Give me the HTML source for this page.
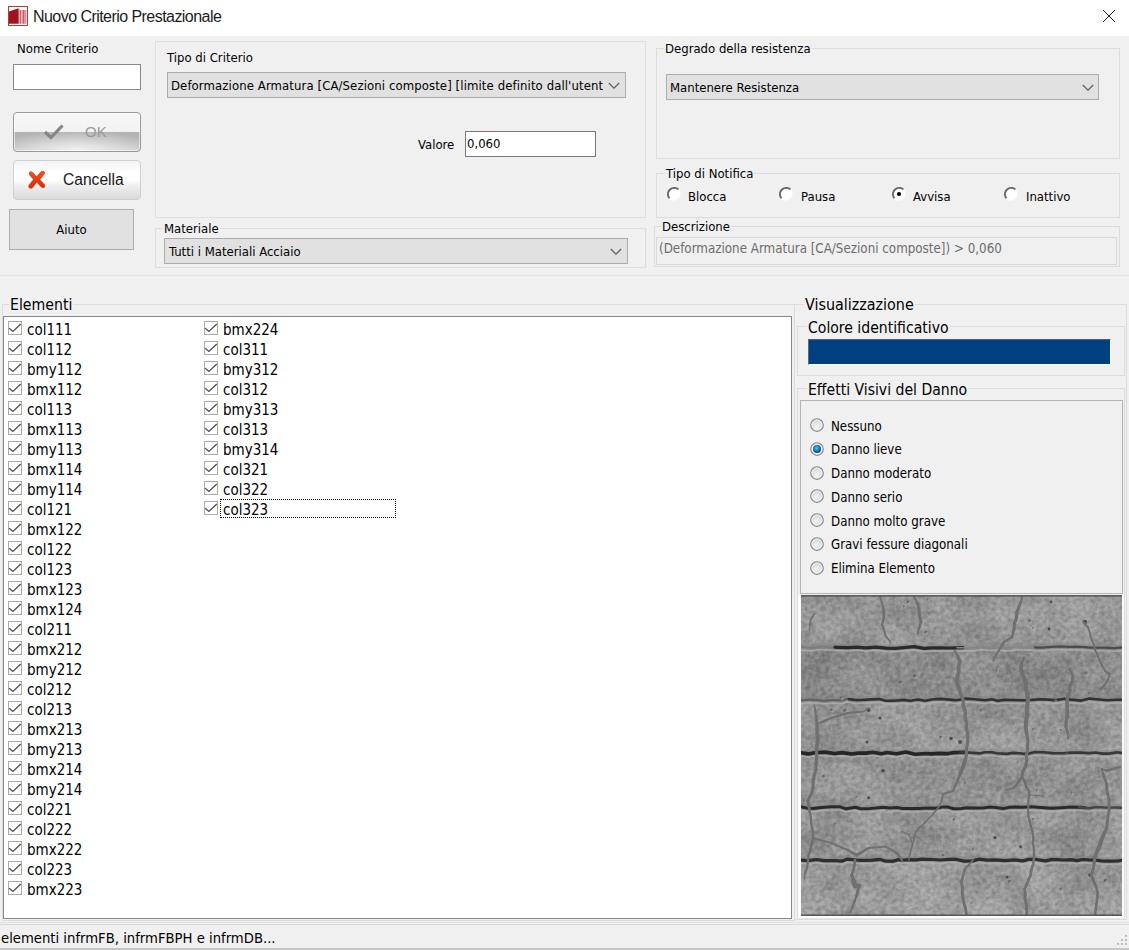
<!DOCTYPE html>
<html lang="it">
<head>
<meta charset="utf-8">
<title>Nuovo Criterio Prestazionale</title>
<style>
html,body{margin:0;padding:0;}
body{width:1129px;height:950px;overflow:hidden;background:#f0f0f0;position:relative;
  font-family:"DejaVu Sans Condensed","Liberation Sans",sans-serif;font-size:13px;color:#000;}
.abs{position:absolute;box-sizing:border-box;}
#titlebar{left:0;top:0;width:1129px;height:36px;background:#fff;}
#title{left:33px;top:7px;color:#1c1c1c;font-family:"Liberation Sans",sans-serif;font-size:16px;letter-spacing:-0.55px;line-height:20px;white-space:nowrap;}
.gb{border:1px solid #dcdcdc;}
.gbl{background:#f0f0f0;white-space:nowrap;line-height:16px;padding:0 1px;}
.lbl{white-space:nowrap;line-height:16px;}
.big{font-size:16px;line-height:20px;}
.combo{background:#e1e1e1;border:1px solid #adadad;line-height:24px;padding-left:6px;white-space:nowrap;overflow:hidden;}
.edit{background:#fff;border:1px solid #7a7a7a;line-height:20px;padding-left:3px;}
#list{left:3px;top:316px;width:789px;height:603px;background:#fff;border:1px solid #828790;}
.it{position:absolute;height:20px;line-height:20px;font-size:15px;white-space:nowrap;}
.it svg{position:absolute;left:0;top:3px;}
.it span{position:absolute;left:19px;top:2px;}
.rl{white-space:nowrap;line-height:16px;}
#status{left:0;top:924px;width:1129px;height:26px;background:#f0f0f0;border-top:1px solid #dadada;border-bottom:2px solid #c6c6c6;}
</style>
</head>
<body>
<div class="abs" id="titlebar"></div>
<div class="abs" id="title">Nuovo Criterio Prestazionale</div>

<svg class="abs" style="left:8px;top:6px" width="20" height="20" viewBox="0 0 20 20">
  <rect x="0.5" y="0.5" width="19" height="19" fill="#fff" stroke="#b83a2e"/>
  <polygon points="1,5.6 9.8,2.6 10.8,2.8 10.8,17.8 1,17.8" fill="#9e1520"/>
  <rect x="10.8" y="3.6" width="0.8" height="14.2" fill="#eab5bb"/>
  <rect x="11.6" y="3.8" width="2" height="14" fill="#d4606f"/>
  <rect x="13.6" y="3.8" width="0.9" height="14" fill="#f3d0d4"/>
  <rect x="14.5" y="4" width="1.8" height="13.8" fill="#cf5565"/>
  <rect x="16.3" y="4" width="2" height="13.8" fill="#dc8893"/>
</svg>
<svg class="abs" style="left:1102px;top:9px" width="14" height="14" viewBox="0 0 14 14"><path d="M1 1 L13 13 M13 1 L1 13" stroke="#000" stroke-width="0.9" fill="none"/></svg>

<div class="abs lbl" style="left:17px;top:41px;">Nome Criterio</div>
<div class="abs edit" style="left:13px;top:64px;width:128px;height:26px;border-color:#8a8a8a;"></div>

<div class="abs" id="okbtn" style="left:13px;top:112px;width:128px;height:40px;border:1px solid #999;border-radius:4px;box-shadow:inset 0 0 0 1px rgba(255,255,255,0.55);background:radial-gradient(ellipse 60% 55% at 50% 100%,rgba(255,255,255,0.75) 0%,rgba(255,255,255,0) 100%),linear-gradient(to bottom,#f7f7f7 0%,#f2f2f2 50%,#b2b2b2 51%,#bcbcbc 75%,#cfcfcf 100%);"></div>
<svg class="abs" style="left:43px;top:123px" width="22" height="18" viewBox="0 0 22 18"><path d="M2 9 L8 14.5 L19.5 2.5" stroke="#868686" stroke-width="3.2" fill="none" stroke-linejoin="miter"/></svg>
<div class="abs" style="left:85px;top:122px;font-family:'Liberation Sans',sans-serif;font-size:15px;line-height:20px;color:#9a9a9a;">OK</div>

<div class="abs" id="cancbtn" style="left:13px;top:160px;width:128px;height:40px;border:1px solid #d0d0d0;border-radius:4px;background:linear-gradient(to bottom,#f3f3f3 0%,#ffffff 30%,#ffffff 50%,#efefef 65%,#d9d9d9 100%);"></div>
<svg class="abs" style="left:27px;top:170px" width="20" height="20" viewBox="0 0 20 20"><defs><linearGradient id="xg" x1="0" y1="0" x2="0" y2="1"><stop offset="0" stop-color="#f4511f"/><stop offset="1" stop-color="#d42c0c"/></linearGradient></defs><path d="M3.2 1.4 C4.6 0.8 5.8 2.2 7 3.4 L9.6 6.2 L13.2 2.2 C14.2 1 15.8 0.8 17.4 1.6 C18.6 2.4 18 3.8 17 4.8 L13.2 9.4 L17.6 14.4 C18.6 15.6 18.4 17 17 17.8 C15.6 18.6 14.4 17.6 13.4 16.6 L9.8 12.6 L6.2 17.2 C5.2 18.4 3.8 19 2.4 18.2 C1 17.4 1.2 15.8 2.2 14.6 L6.2 9.6 L2.4 5.2 C1.4 4 1.6 2.2 3.2 1.4 Z" fill="url(#xg)"/></svg>
<div class="abs" style="left:63px;top:170px;font-family:'Liberation Sans',sans-serif;font-size:15.6px;line-height:20px;color:#1a1a1a;">Cancella</div>

<div class="abs" style="left:9px;top:209px;width:125px;height:41px;background:#e1e1e1;border:1px solid #adadad;text-align:center;line-height:39px;">Aiuto</div>

<div class="abs" style="left:0;top:275px;width:1129px;height:1px;background:#e2e2e2;"></div>

<div class="abs gb" style="left:155px;top:41px;width:491px;height:177px;border-color:#e0e0e0;"></div>
<div class="abs lbl" style="left:167px;top:50px;">Tipo di Criterio</div>
<div class="abs combo" style="left:167px;top:72px;width:459px;height:26px;padding-left:3px;line-height:26px;"><div style="width:432px;overflow:hidden;letter-spacing:0.1px;">Deformazione Armatura [CA/Sezioni composte] [limite definito dall'utente]</div></div>
<svg class="abs" style="left:608px;top:82px" width="12" height="8" viewBox="0 0 12 8"><path d="M0.8 1 L6 6.2 L11.2 1" stroke="#5a5a5a" stroke-width="1.1" fill="none"/></svg>
<div class="abs lbl" style="left:418px;top:137px;">Valore</div>
<div class="abs edit" style="left:465px;top:131px;width:131px;height:26px;line-height:23px;padding-left:1px;">0,060</div>

<div class="abs gb" style="left:155px;top:228px;width:491px;height:40px;"></div>
<div class="abs gbl" style="left:163px;top:221px;">Materiale</div>
<div class="abs combo" style="left:164px;top:238px;width:464px;height:26px;padding-left:4px;line-height:26px;">Tutti i Materiali Acciaio</div>
<svg class="abs" style="left:610px;top:248px" width="12" height="8" viewBox="0 0 12 8"><path d="M0.8 1 L6 6.2 L11.2 1" stroke="#5a5a5a" stroke-width="1.1" fill="none"/></svg>

<div class="abs gb" style="left:656px;top:48px;width:464px;height:111px;"></div>
<div class="abs gbl" style="left:664px;top:41px;">Degrado della resistenza</div>
<div class="abs combo" style="left:666px;top:74px;width:433px;height:26px;padding-left:3px;line-height:26px;">Mantenere Resistenza</div>
<svg class="abs" style="left:1082px;top:84px" width="12" height="8" viewBox="0 0 12 8"><path d="M0.8 1 L6 6.2 L11.2 1" stroke="#5a5a5a" stroke-width="1.1" fill="none"/></svg>

<div class="abs gb" style="left:656px;top:173px;width:464px;height:45px;"></div>
<div class="abs gbl" style="left:665px;top:166px;">Tipo di Notifica</div>
<svg class="abs" style="left:667px;top:187px" width="14" height="14" viewBox="0 0 14 14"><circle cx="7" cy="7" r="6" fill="#fff"/><path d="M2.55 11.45 A6.3 6.3 0 0 1 11.45 2.55" stroke="#686868" stroke-width="1.9" fill="none"/><path d="M11.45 2.55 A6.3 6.3 0 0 1 2.55 11.45" stroke="#fdfdfd" stroke-width="1.2" fill="none"/></svg><div class="abs rl" style="left:688px;top:189px;">Blocca</div>
<svg class="abs" style="left:779px;top:187px" width="14" height="14" viewBox="0 0 14 14"><circle cx="7" cy="7" r="6" fill="#fff"/><path d="M2.55 11.45 A6.3 6.3 0 0 1 11.45 2.55" stroke="#686868" stroke-width="1.9" fill="none"/><path d="M11.45 2.55 A6.3 6.3 0 0 1 2.55 11.45" stroke="#fdfdfd" stroke-width="1.2" fill="none"/></svg><div class="abs rl" style="left:801px;top:189px;">Pausa</div>
<svg class="abs" style="left:892px;top:187px" width="14" height="14" viewBox="0 0 14 14"><circle cx="7" cy="7" r="6" fill="#fff"/><path d="M2.55 11.45 A6.3 6.3 0 0 1 11.45 2.55" stroke="#686868" stroke-width="1.9" fill="none"/><path d="M11.45 2.55 A6.3 6.3 0 0 1 2.55 11.45" stroke="#fdfdfd" stroke-width="1.2" fill="none"/><circle cx="7" cy="7" r="2.1" fill="#000"/></svg><div class="abs rl" style="left:913px;top:189px;">Avvisa</div>
<svg class="abs" style="left:1004px;top:187px" width="14" height="14" viewBox="0 0 14 14"><circle cx="7" cy="7" r="6" fill="#fff"/><path d="M2.55 11.45 A6.3 6.3 0 0 1 11.45 2.55" stroke="#686868" stroke-width="1.9" fill="none"/><path d="M11.45 2.55 A6.3 6.3 0 0 1 2.55 11.45" stroke="#fdfdfd" stroke-width="1.2" fill="none"/></svg><div class="abs rl" style="left:1026px;top:189px;">Inattivo</div>

<div class="abs gb" style="left:654px;top:226px;width:466px;height:41px;"></div>
<div class="abs gbl" style="left:661px;top:219px;">Descrizione</div>
<div class="abs" style="left:656px;top:237px;width:461px;height:28px;border:1px solid #dadada;background:#f0f0f0;color:#6d6d6d;line-height:22px;padding-left:2px;font-size:13.25px;white-space:nowrap;">(Deformazione Armatura [CA/Sezioni composte]) &gt; 0,060</div>

<div class="abs gb" style="left:2px;top:304px;width:793px;height:617px;"></div>
<div class="abs" style="left:0;top:922px;width:1129px;height:1px;background:#e2e2e2;"></div>
<div class="abs gbl" style="left:9px;top:295px;font-size:15.7px;line-height:20px;">Elementi</div>
<div class="abs" id="list">
<div class="it" style="left:4px;top:1px;"><svg width="14" height="14" viewBox="0 0 14 14"><rect x="0.5" y="0.5" width="13" height="13" fill="#fff" stroke="#ababab"/><path d="M1.2 7.2 L4.9 10.4 L12.8 3" stroke="#4d4d4d" stroke-width="1.3" fill="none"/></svg><span>col111</span></div>
<div class="it" style="left:4px;top:21px;"><svg width="14" height="14" viewBox="0 0 14 14"><rect x="0.5" y="0.5" width="13" height="13" fill="#fff" stroke="#ababab"/><path d="M1.2 7.2 L4.9 10.4 L12.8 3" stroke="#4d4d4d" stroke-width="1.3" fill="none"/></svg><span>col112</span></div>
<div class="it" style="left:4px;top:41px;"><svg width="14" height="14" viewBox="0 0 14 14"><rect x="0.5" y="0.5" width="13" height="13" fill="#fff" stroke="#ababab"/><path d="M1.2 7.2 L4.9 10.4 L12.8 3" stroke="#4d4d4d" stroke-width="1.3" fill="none"/></svg><span>bmy112</span></div>
<div class="it" style="left:4px;top:61px;"><svg width="14" height="14" viewBox="0 0 14 14"><rect x="0.5" y="0.5" width="13" height="13" fill="#fff" stroke="#ababab"/><path d="M1.2 7.2 L4.9 10.4 L12.8 3" stroke="#4d4d4d" stroke-width="1.3" fill="none"/></svg><span>bmx112</span></div>
<div class="it" style="left:4px;top:81px;"><svg width="14" height="14" viewBox="0 0 14 14"><rect x="0.5" y="0.5" width="13" height="13" fill="#fff" stroke="#ababab"/><path d="M1.2 7.2 L4.9 10.4 L12.8 3" stroke="#4d4d4d" stroke-width="1.3" fill="none"/></svg><span>col113</span></div>
<div class="it" style="left:4px;top:101px;"><svg width="14" height="14" viewBox="0 0 14 14"><rect x="0.5" y="0.5" width="13" height="13" fill="#fff" stroke="#ababab"/><path d="M1.2 7.2 L4.9 10.4 L12.8 3" stroke="#4d4d4d" stroke-width="1.3" fill="none"/></svg><span>bmx113</span></div>
<div class="it" style="left:4px;top:121px;"><svg width="14" height="14" viewBox="0 0 14 14"><rect x="0.5" y="0.5" width="13" height="13" fill="#fff" stroke="#ababab"/><path d="M1.2 7.2 L4.9 10.4 L12.8 3" stroke="#4d4d4d" stroke-width="1.3" fill="none"/></svg><span>bmy113</span></div>
<div class="it" style="left:4px;top:141px;"><svg width="14" height="14" viewBox="0 0 14 14"><rect x="0.5" y="0.5" width="13" height="13" fill="#fff" stroke="#ababab"/><path d="M1.2 7.2 L4.9 10.4 L12.8 3" stroke="#4d4d4d" stroke-width="1.3" fill="none"/></svg><span>bmx114</span></div>
<div class="it" style="left:4px;top:161px;"><svg width="14" height="14" viewBox="0 0 14 14"><rect x="0.5" y="0.5" width="13" height="13" fill="#fff" stroke="#ababab"/><path d="M1.2 7.2 L4.9 10.4 L12.8 3" stroke="#4d4d4d" stroke-width="1.3" fill="none"/></svg><span>bmy114</span></div>
<div class="it" style="left:4px;top:181px;"><svg width="14" height="14" viewBox="0 0 14 14"><rect x="0.5" y="0.5" width="13" height="13" fill="#fff" stroke="#ababab"/><path d="M1.2 7.2 L4.9 10.4 L12.8 3" stroke="#4d4d4d" stroke-width="1.3" fill="none"/></svg><span>col121</span></div>
<div class="it" style="left:4px;top:201px;"><svg width="14" height="14" viewBox="0 0 14 14"><rect x="0.5" y="0.5" width="13" height="13" fill="#fff" stroke="#ababab"/><path d="M1.2 7.2 L4.9 10.4 L12.8 3" stroke="#4d4d4d" stroke-width="1.3" fill="none"/></svg><span>bmx122</span></div>
<div class="it" style="left:4px;top:221px;"><svg width="14" height="14" viewBox="0 0 14 14"><rect x="0.5" y="0.5" width="13" height="13" fill="#fff" stroke="#ababab"/><path d="M1.2 7.2 L4.9 10.4 L12.8 3" stroke="#4d4d4d" stroke-width="1.3" fill="none"/></svg><span>col122</span></div>
<div class="it" style="left:4px;top:241px;"><svg width="14" height="14" viewBox="0 0 14 14"><rect x="0.5" y="0.5" width="13" height="13" fill="#fff" stroke="#ababab"/><path d="M1.2 7.2 L4.9 10.4 L12.8 3" stroke="#4d4d4d" stroke-width="1.3" fill="none"/></svg><span>col123</span></div>
<div class="it" style="left:4px;top:261px;"><svg width="14" height="14" viewBox="0 0 14 14"><rect x="0.5" y="0.5" width="13" height="13" fill="#fff" stroke="#ababab"/><path d="M1.2 7.2 L4.9 10.4 L12.8 3" stroke="#4d4d4d" stroke-width="1.3" fill="none"/></svg><span>bmx123</span></div>
<div class="it" style="left:4px;top:281px;"><svg width="14" height="14" viewBox="0 0 14 14"><rect x="0.5" y="0.5" width="13" height="13" fill="#fff" stroke="#ababab"/><path d="M1.2 7.2 L4.9 10.4 L12.8 3" stroke="#4d4d4d" stroke-width="1.3" fill="none"/></svg><span>bmx124</span></div>
<div class="it" style="left:4px;top:301px;"><svg width="14" height="14" viewBox="0 0 14 14"><rect x="0.5" y="0.5" width="13" height="13" fill="#fff" stroke="#ababab"/><path d="M1.2 7.2 L4.9 10.4 L12.8 3" stroke="#4d4d4d" stroke-width="1.3" fill="none"/></svg><span>col211</span></div>
<div class="it" style="left:4px;top:321px;"><svg width="14" height="14" viewBox="0 0 14 14"><rect x="0.5" y="0.5" width="13" height="13" fill="#fff" stroke="#ababab"/><path d="M1.2 7.2 L4.9 10.4 L12.8 3" stroke="#4d4d4d" stroke-width="1.3" fill="none"/></svg><span>bmx212</span></div>
<div class="it" style="left:4px;top:341px;"><svg width="14" height="14" viewBox="0 0 14 14"><rect x="0.5" y="0.5" width="13" height="13" fill="#fff" stroke="#ababab"/><path d="M1.2 7.2 L4.9 10.4 L12.8 3" stroke="#4d4d4d" stroke-width="1.3" fill="none"/></svg><span>bmy212</span></div>
<div class="it" style="left:4px;top:361px;"><svg width="14" height="14" viewBox="0 0 14 14"><rect x="0.5" y="0.5" width="13" height="13" fill="#fff" stroke="#ababab"/><path d="M1.2 7.2 L4.9 10.4 L12.8 3" stroke="#4d4d4d" stroke-width="1.3" fill="none"/></svg><span>col212</span></div>
<div class="it" style="left:4px;top:381px;"><svg width="14" height="14" viewBox="0 0 14 14"><rect x="0.5" y="0.5" width="13" height="13" fill="#fff" stroke="#ababab"/><path d="M1.2 7.2 L4.9 10.4 L12.8 3" stroke="#4d4d4d" stroke-width="1.3" fill="none"/></svg><span>col213</span></div>
<div class="it" style="left:4px;top:401px;"><svg width="14" height="14" viewBox="0 0 14 14"><rect x="0.5" y="0.5" width="13" height="13" fill="#fff" stroke="#ababab"/><path d="M1.2 7.2 L4.9 10.4 L12.8 3" stroke="#4d4d4d" stroke-width="1.3" fill="none"/></svg><span>bmx213</span></div>
<div class="it" style="left:4px;top:421px;"><svg width="14" height="14" viewBox="0 0 14 14"><rect x="0.5" y="0.5" width="13" height="13" fill="#fff" stroke="#ababab"/><path d="M1.2 7.2 L4.9 10.4 L12.8 3" stroke="#4d4d4d" stroke-width="1.3" fill="none"/></svg><span>bmy213</span></div>
<div class="it" style="left:4px;top:441px;"><svg width="14" height="14" viewBox="0 0 14 14"><rect x="0.5" y="0.5" width="13" height="13" fill="#fff" stroke="#ababab"/><path d="M1.2 7.2 L4.9 10.4 L12.8 3" stroke="#4d4d4d" stroke-width="1.3" fill="none"/></svg><span>bmx214</span></div>
<div class="it" style="left:4px;top:461px;"><svg width="14" height="14" viewBox="0 0 14 14"><rect x="0.5" y="0.5" width="13" height="13" fill="#fff" stroke="#ababab"/><path d="M1.2 7.2 L4.9 10.4 L12.8 3" stroke="#4d4d4d" stroke-width="1.3" fill="none"/></svg><span>bmy214</span></div>
<div class="it" style="left:4px;top:481px;"><svg width="14" height="14" viewBox="0 0 14 14"><rect x="0.5" y="0.5" width="13" height="13" fill="#fff" stroke="#ababab"/><path d="M1.2 7.2 L4.9 10.4 L12.8 3" stroke="#4d4d4d" stroke-width="1.3" fill="none"/></svg><span>col221</span></div>
<div class="it" style="left:4px;top:501px;"><svg width="14" height="14" viewBox="0 0 14 14"><rect x="0.5" y="0.5" width="13" height="13" fill="#fff" stroke="#ababab"/><path d="M1.2 7.2 L4.9 10.4 L12.8 3" stroke="#4d4d4d" stroke-width="1.3" fill="none"/></svg><span>col222</span></div>
<div class="it" style="left:4px;top:521px;"><svg width="14" height="14" viewBox="0 0 14 14"><rect x="0.5" y="0.5" width="13" height="13" fill="#fff" stroke="#ababab"/><path d="M1.2 7.2 L4.9 10.4 L12.8 3" stroke="#4d4d4d" stroke-width="1.3" fill="none"/></svg><span>bmx222</span></div>
<div class="it" style="left:4px;top:541px;"><svg width="14" height="14" viewBox="0 0 14 14"><rect x="0.5" y="0.5" width="13" height="13" fill="#fff" stroke="#ababab"/><path d="M1.2 7.2 L4.9 10.4 L12.8 3" stroke="#4d4d4d" stroke-width="1.3" fill="none"/></svg><span>col223</span></div>
<div class="it" style="left:4px;top:561px;"><svg width="14" height="14" viewBox="0 0 14 14"><rect x="0.5" y="0.5" width="13" height="13" fill="#fff" stroke="#ababab"/><path d="M1.2 7.2 L4.9 10.4 L12.8 3" stroke="#4d4d4d" stroke-width="1.3" fill="none"/></svg><span>bmx223</span></div>
<div class="it" style="left:200px;top:1px;"><svg width="14" height="14" viewBox="0 0 14 14"><rect x="0.5" y="0.5" width="13" height="13" fill="#fff" stroke="#ababab"/><path d="M1.2 7.2 L4.9 10.4 L12.8 3" stroke="#4d4d4d" stroke-width="1.3" fill="none"/></svg><span>bmx224</span></div>
<div class="it" style="left:200px;top:21px;"><svg width="14" height="14" viewBox="0 0 14 14"><rect x="0.5" y="0.5" width="13" height="13" fill="#fff" stroke="#ababab"/><path d="M1.2 7.2 L4.9 10.4 L12.8 3" stroke="#4d4d4d" stroke-width="1.3" fill="none"/></svg><span>col311</span></div>
<div class="it" style="left:200px;top:41px;"><svg width="14" height="14" viewBox="0 0 14 14"><rect x="0.5" y="0.5" width="13" height="13" fill="#fff" stroke="#ababab"/><path d="M1.2 7.2 L4.9 10.4 L12.8 3" stroke="#4d4d4d" stroke-width="1.3" fill="none"/></svg><span>bmy312</span></div>
<div class="it" style="left:200px;top:61px;"><svg width="14" height="14" viewBox="0 0 14 14"><rect x="0.5" y="0.5" width="13" height="13" fill="#fff" stroke="#ababab"/><path d="M1.2 7.2 L4.9 10.4 L12.8 3" stroke="#4d4d4d" stroke-width="1.3" fill="none"/></svg><span>col312</span></div>
<div class="it" style="left:200px;top:81px;"><svg width="14" height="14" viewBox="0 0 14 14"><rect x="0.5" y="0.5" width="13" height="13" fill="#fff" stroke="#ababab"/><path d="M1.2 7.2 L4.9 10.4 L12.8 3" stroke="#4d4d4d" stroke-width="1.3" fill="none"/></svg><span>bmy313</span></div>
<div class="it" style="left:200px;top:101px;"><svg width="14" height="14" viewBox="0 0 14 14"><rect x="0.5" y="0.5" width="13" height="13" fill="#fff" stroke="#ababab"/><path d="M1.2 7.2 L4.9 10.4 L12.8 3" stroke="#4d4d4d" stroke-width="1.3" fill="none"/></svg><span>col313</span></div>
<div class="it" style="left:200px;top:121px;"><svg width="14" height="14" viewBox="0 0 14 14"><rect x="0.5" y="0.5" width="13" height="13" fill="#fff" stroke="#ababab"/><path d="M1.2 7.2 L4.9 10.4 L12.8 3" stroke="#4d4d4d" stroke-width="1.3" fill="none"/></svg><span>bmy314</span></div>
<div class="it" style="left:200px;top:141px;"><svg width="14" height="14" viewBox="0 0 14 14"><rect x="0.5" y="0.5" width="13" height="13" fill="#fff" stroke="#ababab"/><path d="M1.2 7.2 L4.9 10.4 L12.8 3" stroke="#4d4d4d" stroke-width="1.3" fill="none"/></svg><span>col321</span></div>
<div class="it" style="left:200px;top:161px;"><svg width="14" height="14" viewBox="0 0 14 14"><rect x="0.5" y="0.5" width="13" height="13" fill="#fff" stroke="#ababab"/><path d="M1.2 7.2 L4.9 10.4 L12.8 3" stroke="#4d4d4d" stroke-width="1.3" fill="none"/></svg><span>col322</span></div>
<div class="it" style="left:200px;top:181px;"><svg width="14" height="14" viewBox="0 0 14 14"><rect x="0.5" y="0.5" width="13" height="13" fill="#fff" stroke="#ababab"/><path d="M1.2 7.2 L4.9 10.4 L12.8 3" stroke="#4d4d4d" stroke-width="1.3" fill="none"/></svg><span>col323</span></div>
<div class="abs" style="left:216px;top:182px;width:176px;height:19px;border:1px dotted #000;"></div>
</div>

<svg width="0" height="0" style="position:absolute"><defs>
<radialGradient id="rbg" cx="0.5" cy="0.65" r="0.6"><stop offset="0" stop-color="#f4f5f6"/><stop offset="0.6" stop-color="#dfe2e5"/><stop offset="1" stop-color="#c9cdd1"/></radialGradient>
<radialGradient id="rdot" cx="0.45" cy="0.4" r="0.6"><stop offset="0" stop-color="#5cc3f0"/><stop offset="0.55" stop-color="#1a7fc4"/><stop offset="1" stop-color="#0b3f73"/></radialGradient>
</defs></svg>
<div class="abs gb" style="left:794px;top:304px;width:333px;height:616px;"></div>
<div class="abs gbl" style="left:804px;top:295px;font-size:15.95px;line-height:20px;">Visualizzazione</div>
<div class="abs gb" style="left:797px;top:326px;width:328px;height:50px;"></div>
<div class="abs gbl" style="left:807px;top:318px;font-size:15.6px;line-height:20px;">Colore identificativo</div>
<div class="abs" style="left:808px;top:339px;width:303px;height:26px;background:#004080;border-top:1px solid #4f5f73;border-left:1px solid #4f6a8a;border-right:1px solid #fff;border-bottom:1px solid #fff;"></div>
<div class="abs gb" style="left:797px;top:388px;width:328px;height:531px;border-bottom-color:#e6e6e6;"></div>
<div class="abs" style="left:798px;top:595px;width:326px;height:323px;background:#fbfbfb;"></div>
<div class="abs gbl" style="left:807px;top:380px;font-size:15.6px;line-height:20px;">Effetti Visivi del Danno</div>
<div class="abs" style="left:800px;top:400px;width:323px;height:194px;border:1px solid #b4b4b4;"></div>
<svg class="abs" style="left:810px;top:418.1px" width="14" height="14" viewBox="0 0 14 14"><circle cx="7" cy="7" r="6.3" fill="url(#rbg)" stroke="#868787" stroke-width="1.15"/><circle cx="7" cy="7" r="5" fill="none" stroke="#f6f6f6" stroke-width="0.9"/></svg><div class="abs rl" style="left:831px;top:419px;font-size:13.2px;">Nessuno</div>
<svg class="abs" style="left:810px;top:441.9px" width="14" height="14" viewBox="0 0 14 14"><circle cx="7" cy="7" r="6.3" fill="url(#rbg)" stroke="#868787" stroke-width="1.15"/><circle cx="7" cy="7" r="5" fill="none" stroke="#f6f6f6" stroke-width="0.9"/><circle cx="7" cy="7" r="4" fill="url(#rdot)"/></svg><div class="abs rl" style="left:831px;top:442px;font-size:13.2px;">Danno lieve</div>
<svg class="abs" style="left:810px;top:465.6px" width="14" height="14" viewBox="0 0 14 14"><circle cx="7" cy="7" r="6.3" fill="url(#rbg)" stroke="#868787" stroke-width="1.15"/><circle cx="7" cy="7" r="5" fill="none" stroke="#f6f6f6" stroke-width="0.9"/></svg><div class="abs rl" style="left:831px;top:466px;font-size:13.2px;">Danno moderato</div>
<svg class="abs" style="left:810px;top:489.4px" width="14" height="14" viewBox="0 0 14 14"><circle cx="7" cy="7" r="6.3" fill="url(#rbg)" stroke="#868787" stroke-width="1.15"/><circle cx="7" cy="7" r="5" fill="none" stroke="#f6f6f6" stroke-width="0.9"/></svg><div class="abs rl" style="left:831px;top:490px;font-size:13.2px;">Danno serio</div>
<svg class="abs" style="left:810px;top:513.1px" width="14" height="14" viewBox="0 0 14 14"><circle cx="7" cy="7" r="6.3" fill="url(#rbg)" stroke="#868787" stroke-width="1.15"/><circle cx="7" cy="7" r="5" fill="none" stroke="#f6f6f6" stroke-width="0.9"/></svg><div class="abs rl" style="left:831px;top:514px;font-size:13.2px;">Danno molto grave</div>
<svg class="abs" style="left:810px;top:536.9px" width="14" height="14" viewBox="0 0 14 14"><circle cx="7" cy="7" r="6.3" fill="url(#rbg)" stroke="#868787" stroke-width="1.15"/><circle cx="7" cy="7" r="5" fill="none" stroke="#f6f6f6" stroke-width="0.9"/></svg><div class="abs rl" style="left:831px;top:537px;font-size:13.2px;">Gravi fessure diagonali</div>
<svg class="abs" style="left:810px;top:560.6px" width="14" height="14" viewBox="0 0 14 14"><circle cx="7" cy="7" r="6.3" fill="url(#rbg)" stroke="#868787" stroke-width="1.15"/><circle cx="7" cy="7" r="5" fill="none" stroke="#f6f6f6" stroke-width="0.9"/></svg><div class="abs rl" style="left:831px;top:561px;font-size:13.2px;">Elimina Elemento</div>

<!--TEX--><svg class="abs" style="left:801px;top:595px" width="321" height="321" viewBox="0 0 321 321">
<defs>
<filter id="noise" x="0" y="0" width="100%" height="100%">
<feTurbulence type="fractalNoise" baseFrequency="0.02 0.03" numOctaves="4" seed="7" result="t"/>
<feColorMatrix in="t" type="matrix" values="0 0 0 0 0  0 0 0 0 0  0 0 0 0 0  1.8 0 0 0 -0.6"/>
</filter>
<filter id="noise2" x="0" y="0" width="100%" height="100%">
<feTurbulence type="fractalNoise" baseFrequency="0.25 0.2" numOctaves="2" seed="21" result="t"/>
<feColorMatrix in="t" type="matrix" values="0 0 0 0 1  0 0 0 0 1  0 0 0 0 1  0 1.6 0 0 -0.55"/>
</filter>
<filter id="soft" x="-2%" y="-2%" width="104%" height="104%"><feGaussianBlur stdDeviation="0.55"/></filter>
<filter id="noise3" x="0" y="0" width="100%" height="100%">
<feTurbulence type="fractalNoise" baseFrequency="0.2 0.25" numOctaves="2" seed="4" result="t"/>
<feColorMatrix in="t" type="matrix" values="0 0 0 0 0  0 0 0 0 0  0 0 0 0 0  1.6 0 0 0 -0.55"/>
</filter>
</defs>
<rect width="321" height="321" fill="#9d9d9d"/>
<rect x="0" y="0" width="321" height="52.4" fill="#a4a4a4"/><rect x="0" y="52.4" width="321" height="52.300000000000004" fill="#969696"/><rect x="0" y="104.7" width="321" height="53.39999999999999" fill="#a3a3a3"/><rect x="0" y="158.1" width="321" height="54.70000000000002" fill="#a0a0a0"/><rect x="0" y="212.8" width="321" height="52.39999999999998" fill="#a2a2a2"/><rect x="0" y="265.2" width="321" height="55.80000000000001" fill="#a9a9a9"/>
<rect width="321" height="321" filter="url(#noise)" fill="#000" opacity="0.2"/>
<rect width="321" height="321" filter="url(#noise2)" opacity="0.22"/>
<rect width="321" height="321" filter="url(#noise3)" opacity="0.22"/>
<g filter="url(#soft)">
<path d="M0.0 51.9 L10.7 52.7 L19.2 51.3 L27.4 51.9 L36.5 52.3 L46.4 52.7 L56.2 52.1 L65.0 52.9 L75.0 52.1 L85.0 53.2 L94.2 53.4 L104.9 52.4 L113.1 51.7 L123.1 53.4 L131.0 52.8 L140.3 52.9 L146.3 53.0 L154.8 52.8 L162.3 52.7 L172.0 52.7 L181.3 51.4 L187.3 52.3 L196.2 51.8 L205.3 52.7 L210.5 52.3 L216.9 51.4 L222.7 52.0 L228.8 51.7 L234.0 52.3 L241.3 52.6 L249.8 51.8 L260.2 51.3 L267.7 51.9 L275.1 51.6 L285.1 52.1 L290.3 52.6 L295.9 52.5 L302.9 52.6 L313.7 53.1 L321.0 52.4" stroke="#858585" stroke-width="7" fill="none" opacity="0.5"/>
<path d="M0.0 55.1 L10.7 55.9 L19.2 54.5 L27.4 55.1 L36.5 55.5 L46.4 55.9 L56.2 55.3 L65.0 56.1 L75.0 55.3 L85.0 56.4 L94.2 56.6 L104.9 55.6 L113.1 54.9 L123.1 56.6 L131.0 56.0 L140.3 56.1 L146.3 56.2 L154.8 56.0 L162.3 55.9 L172.0 55.9 L181.3 54.6 L187.3 55.5 L196.2 55.0 L205.3 55.9 L210.5 55.5 L216.9 54.6 L222.7 55.2 L228.8 54.9 L234.0 55.5 L241.3 55.8 L249.8 55.0 L260.2 54.5 L267.7 55.1 L275.1 54.8 L285.1 55.3 L290.3 55.8 L295.9 55.7 L302.9 55.8 L313.7 56.3 L321.0 55.6" stroke="#b6b6b6" stroke-width="1.6" fill="none" opacity="0.7"/>
<path d="M0.0 51.9 L10.7 52.7 L19.2 51.3 L27.4 51.9 L36.5 52.3 L40.0 52.5" stroke="#7c7c7c" stroke-width="1.6" fill="none" stroke-linejoin="round" stroke-linecap="round"/>
<path d="M34.0 52.2 L36.5 52.3 L46.4 52.7 L56.2 52.1 L65.0 52.9 L75.0 52.1 L85.0 53.2 L94.2 53.4 L104.9 52.4 L113.1 51.7 L123.1 53.4 L131.0 52.8 L140.3 52.9 L146.3 53.0 L154.8 52.8 L162.0 52.7" stroke="#2c2c2c" stroke-width="3.2" fill="none" stroke-linejoin="round" stroke-linecap="round"/>
<path d="M156.0 52.7 L162.3 52.7 L172.0 52.7 L181.3 51.4 L187.3 52.3 L196.2 51.8 L205.3 52.7 L210.5 52.3 L216.9 51.4 L222.7 52.0 L228.8 51.7 L234.0 52.3 L240.0 52.6" stroke="#858585" stroke-width="1.5" fill="none" stroke-linejoin="round" stroke-linecap="round"/>
<path d="M234.0 52.3 L241.3 52.6 L249.8 51.8 L260.2 51.3 L267.7 51.9 L275.1 51.6 L285.1 52.1 L290.3 52.6 L295.9 52.5 L302.9 52.6 L313.7 53.1 L321.0 52.4" stroke="#4c4c4c" stroke-width="2.2" fill="none" stroke-linejoin="round" stroke-linecap="round"/>
<path d="M0.0 105.4 L8.9 104.4 L14.7 104.9 L23.1 105.7 L33.9 104.9 L41.0 105.6 L46.0 103.8 L54.4 105.0 L60.2 105.0 L70.6 104.4 L78.2 104.1 L84.9 105.7 L92.2 105.7 L102.7 104.9 L109.3 105.8 L117.2 104.5 L124.1 105.8 L132.1 104.2 L140.0 103.9 L148.7 104.6 L155.4 105.3 L165.4 103.6 L173.6 104.2 L184.2 105.3 L190.7 104.2 L196.6 105.8 L203.4 104.9 L211.2 105.0 L219.8 105.2 L225.6 105.3 L232.4 104.8 L239.4 104.3 L247.6 104.6 L254.7 105.2 L263.3 103.7 L269.8 104.6 L280.3 105.6 L288.6 103.6 L298.2 104.5 L306.7 105.2 L315.5 104.7 L321.0 104.7" stroke="#858585" stroke-width="7" fill="none" opacity="0.5"/>
<path d="M0.0 108.6 L8.9 107.6 L14.7 108.1 L23.1 108.9 L33.9 108.1 L41.0 108.8 L46.0 107.0 L54.4 108.2 L60.2 108.2 L70.6 107.6 L78.2 107.3 L84.9 108.9 L92.2 108.9 L102.7 108.1 L109.3 109.0 L117.2 107.7 L124.1 109.0 L132.1 107.4 L140.0 107.1 L148.7 107.8 L155.4 108.5 L165.4 106.8 L173.6 107.4 L184.2 108.5 L190.7 107.4 L196.6 109.0 L203.4 108.1 L211.2 108.2 L219.8 108.4 L225.6 108.5 L232.4 108.0 L239.4 107.5 L247.6 107.8 L254.7 108.4 L263.3 106.9 L269.8 107.8 L280.3 108.8 L288.6 106.8 L298.2 107.7 L306.7 108.4 L315.5 107.9 L321.0 107.9" stroke="#b6b6b6" stroke-width="1.6" fill="none" opacity="0.7"/>
<path d="M0.0 105.4 L8.9 104.4 L14.7 104.9 L23.1 105.7 L33.9 104.9 L41.0 105.6 L46.0 103.8 L54.0 104.9" stroke="#5e5e5e" stroke-width="2" fill="none" stroke-linejoin="round" stroke-linecap="round"/>
<path d="M48.0 104.1 L54.4 105.0 L60.2 105.0 L70.6 104.4 L78.2 104.1 L84.9 105.7 L92.2 105.7 L102.7 104.9 L109.3 105.8 L117.2 104.5 L124.1 105.8 L132.1 104.2 L140.0 103.9 L148.7 104.6 L155.4 105.3 L165.4 103.6 L173.6 104.2 L184.2 105.3 L190.7 104.2 L196.6 105.8 L203.4 104.9 L211.2 105.0 L219.8 105.2 L225.6 105.3 L232.4 104.8 L239.4 104.3 L247.6 104.6 L254.7 105.2 L263.3 103.7 L269.8 104.6 L280.3 105.6 L288.6 103.6 L298.2 104.5 L306.7 105.2 L315.5 104.7 L321.0 104.7" stroke="#323232" stroke-width="2.6" fill="none" stroke-linejoin="round" stroke-linecap="round"/>
<path d="M0.0 157.8 L7.4 158.9 L13.5 157.7 L23.5 157.1 L33.5 158.5 L41.1 157.6 L50.8 159.0 L56.7 158.1 L65.0 158.1 L71.9 157.3 L80.5 158.8 L85.9 157.5 L95.8 158.7 L104.8 157.1 L114.1 159.2 L125.1 158.5 L130.4 158.9 L136.7 158.4 L147.4 158.6 L153.2 157.6 L163.7 157.3 L172.4 157.9 L178.4 158.4 L183.6 157.2 L190.9 157.2 L196.2 158.3 L205.7 158.9 L211.5 157.9 L218.4 158.3 L226.3 159.1 L233.6 157.1 L242.8 157.3 L251.5 158.1 L262.0 158.2 L270.7 157.6 L279.0 157.6 L288.5 158.1 L294.4 157.5 L301.6 158.6 L307.7 158.6 L316.6 157.2 L321.0 158.1" stroke="#858585" stroke-width="7" fill="none" opacity="0.5"/>
<path d="M0.0 161.0 L7.4 162.1 L13.5 160.9 L23.5 160.3 L33.5 161.7 L41.1 160.8 L50.8 162.2 L56.7 161.3 L65.0 161.3 L71.9 160.5 L80.5 162.0 L85.9 160.7 L95.8 161.9 L104.8 160.3 L114.1 162.4 L125.1 161.7 L130.4 162.1 L136.7 161.6 L147.4 161.8 L153.2 160.8 L163.7 160.5 L172.4 161.1 L178.4 161.6 L183.6 160.4 L190.9 160.4 L196.2 161.5 L205.7 162.1 L211.5 161.1 L218.4 161.5 L226.3 162.3 L233.6 160.3 L242.8 160.5 L251.5 161.3 L262.0 161.4 L270.7 160.8 L279.0 160.8 L288.5 161.3 L294.4 160.7 L301.6 161.8 L307.7 161.8 L316.6 160.4 L321.0 161.3" stroke="#b6b6b6" stroke-width="1.6" fill="none" opacity="0.7"/>
<path d="M0.0 157.8 L7.4 158.9 L13.5 157.7 L23.5 157.1 L33.5 158.5 L41.1 157.6 L50.8 159.0 L56.7 158.1 L65.0 158.1 L71.9 157.3 L80.5 158.8 L85.9 157.5 L95.8 158.7 L104.8 157.1 L114.1 159.2 L125.1 158.5 L130.4 158.9 L136.7 158.4 L147.4 158.6 L153.2 157.6 L163.7 157.3 L165.0 157.4" stroke="#262626" stroke-width="3.6" fill="none" stroke-linejoin="round" stroke-linecap="round"/>
<path d="M159.0 157.5 L163.7 157.3 L172.4 157.9 L178.4 158.4 L183.6 157.2 L190.9 157.2 L196.2 158.3 L205.7 158.9 L211.5 157.9 L218.4 158.3 L226.3 159.1 L233.6 157.1 L242.8 157.3 L251.5 158.1 L262.0 158.2 L270.7 157.6 L279.0 157.6 L288.5 158.1 L294.4 157.5 L301.6 158.6 L307.7 158.6 L316.6 157.2 L321.0 158.1" stroke="#383838" stroke-width="2.6" fill="none" stroke-linejoin="round" stroke-linecap="round"/>
<path d="M0.0 211.9 L5.7 213.0 L12.2 213.6 L20.1 212.4 L29.8 211.8 L39.2 211.8 L45.1 213.8 L54.2 212.2 L59.9 213.8 L68.9 213.5 L74.7 213.1 L81.8 212.2 L88.8 213.1 L95.9 212.5 L101.7 213.5 L110.6 213.5 L118.2 213.6 L126.3 213.0 L134.8 213.3 L142.2 211.9 L147.3 212.1 L152.6 213.7 L160.5 213.4 L165.5 212.7 L175.8 213.1 L183.4 212.7 L189.0 212.0 L194.9 212.5 L202.3 213.6 L208.2 212.3 L214.8 212.1 L221.6 212.2 L229.4 211.8 L240.0 212.5 L250.6 213.2 L259.7 212.7 L270.3 212.0 L279.3 212.3 L288.4 213.3 L294.4 212.1 L299.5 212.2 L305.0 212.6 L315.8 212.5 L321.0 212.8" stroke="#858585" stroke-width="7" fill="none" opacity="0.5"/>
<path d="M0.0 215.1 L5.7 216.2 L12.2 216.8 L20.1 215.6 L29.8 215.0 L39.2 215.0 L45.1 217.0 L54.2 215.4 L59.9 217.0 L68.9 216.7 L74.7 216.3 L81.8 215.4 L88.8 216.3 L95.9 215.7 L101.7 216.7 L110.6 216.7 L118.2 216.8 L126.3 216.2 L134.8 216.5 L142.2 215.1 L147.3 215.3 L152.6 216.9 L160.5 216.6 L165.5 215.9 L175.8 216.3 L183.4 215.9 L189.0 215.2 L194.9 215.7 L202.3 216.8 L208.2 215.5 L214.8 215.3 L221.6 215.4 L229.4 215.0 L240.0 215.7 L250.6 216.4 L259.7 215.9 L270.3 215.2 L279.3 215.5 L288.4 216.5 L294.4 215.3 L299.5 215.4 L305.0 215.8 L315.8 215.7 L321.0 216.0" stroke="#b6b6b6" stroke-width="1.6" fill="none" opacity="0.7"/>
<path d="M0.0 211.9 L5.7 213.0 L12.2 213.6 L20.1 212.4 L29.8 211.8 L39.2 211.8 L45.1 213.8 L54.2 212.2 L59.9 213.8 L68.9 213.5 L74.7 213.1 L81.8 212.2 L88.8 213.1 L95.9 212.5 L101.7 213.5 L110.6 213.5 L118.2 213.6 L126.3 213.0 L134.8 213.3 L142.2 211.9 L147.3 212.1 L152.6 213.7 L160.5 213.4 L165.5 212.7 L175.8 213.1 L183.4 212.7 L189.0 212.0 L194.9 212.5 L202.3 213.6 L208.2 212.3 L214.8 212.1 L221.6 212.2 L229.4 211.8 L240.0 212.5 L250.6 213.2 L259.7 212.7 L270.3 212.0 L279.3 212.3 L284.0 212.8" stroke="#2c2c2c" stroke-width="3" fill="none" stroke-linejoin="round" stroke-linecap="round"/>
<path d="M278.0 212.3 L279.3 212.3 L288.4 213.3 L294.4 212.1 L299.5 212.2 L305.0 212.6 L315.8 212.5 L321.0 212.8" stroke="#444" stroke-width="2.4" fill="none" stroke-linejoin="round" stroke-linecap="round"/>
<path d="M0.0 265.1 L6.7 265.7 L16.0 264.5 L22.4 265.6 L33.1 265.5 L40.7 266.2 L45.7 264.2 L55.4 265.0 L60.7 265.3 L71.6 265.2 L78.7 264.3 L84.1 266.1 L92.1 266.2 L97.4 264.6 L102.7 265.0 L108.1 264.7 L115.5 264.8 L120.8 264.2 L131.6 264.5 L139.7 265.0 L147.9 264.3 L154.8 264.3 L163.0 266.1 L171.6 266.0 L177.9 264.1 L186.1 265.2 L194.6 264.9 L203.3 265.7 L213.8 264.8 L221.5 265.9 L227.8 264.4 L234.7 264.3 L244.3 265.9 L251.2 264.4 L256.7 264.6 L262.2 265.0 L270.7 264.6 L276.0 265.6 L281.3 264.5 L288.0 264.9 L293.6 265.0 L300.5 265.8 L308.8 266.1 L317.8 265.8 L321.0 265.2" stroke="#858585" stroke-width="7" fill="none" opacity="0.5"/>
<path d="M0.0 268.3 L6.7 268.9 L16.0 267.7 L22.4 268.8 L33.1 268.7 L40.7 269.4 L45.7 267.4 L55.4 268.2 L60.7 268.5 L71.6 268.4 L78.7 267.5 L84.1 269.3 L92.1 269.4 L97.4 267.8 L102.7 268.2 L108.1 267.9 L115.5 268.0 L120.8 267.4 L131.6 267.7 L139.7 268.2 L147.9 267.5 L154.8 267.5 L163.0 269.3 L171.6 269.2 L177.9 267.3 L186.1 268.4 L194.6 268.1 L203.3 268.9 L213.8 268.0 L221.5 269.1 L227.8 267.6 L234.7 267.5 L244.3 269.1 L251.2 267.6 L256.7 267.8 L262.2 268.2 L270.7 267.8 L276.0 268.8 L281.3 267.7 L288.0 268.1 L293.6 268.2 L300.5 269.0 L308.8 269.3 L317.8 269.0 L321.0 268.4" stroke="#b6b6b6" stroke-width="1.6" fill="none" opacity="0.7"/>
<path d="M0.0 265.1 L6.7 265.7 L16.0 264.5 L22.4 265.6 L33.1 265.5 L40.7 266.2 L45.7 264.2 L55.4 265.0 L60.7 265.3 L71.6 265.2 L78.7 264.3 L84.1 266.1 L92.1 266.2 L97.4 264.6 L102.7 265.0 L108.1 264.7 L115.5 264.8 L120.8 264.2 L131.6 264.5 L139.7 265.0 L147.9 264.3 L154.8 264.3 L163.0 266.1 L171.6 266.0 L177.9 264.1 L186.1 265.2 L194.6 264.9 L203.3 265.7 L213.8 264.8 L221.5 265.9 L227.8 264.4 L234.7 264.3 L244.3 265.9 L251.2 264.4 L256.7 264.6 L262.2 265.0 L270.7 264.6 L276.0 265.6 L281.3 264.5 L288.0 264.9 L293.6 265.0 L300.5 265.8 L308.8 266.1 L317.8 265.8 L321.0 265.2" stroke="#2e2e2e" stroke-width="3.2" fill="none" stroke-linejoin="round" stroke-linecap="round"/>

<circle cx="142.3" cy="260.3" r="1.4" fill="#4a4a4a" opacity="0.78"/><circle cx="143.2" cy="261.3" r="1.4" fill="#c4c4c4" opacity="0.35"/><circle cx="232.3" cy="223.9" r="1.0" fill="#4a4a4a" opacity="0.72"/><circle cx="233.2" cy="224.9" r="1.0" fill="#c4c4c4" opacity="0.35"/><circle cx="123.5" cy="44.0" r="0.8" fill="#4a4a4a" opacity="0.43"/><circle cx="124.4" cy="45.0" r="0.8" fill="#c4c4c4" opacity="0.35"/><circle cx="85.7" cy="215.9" r="1.0" fill="#4a4a4a" opacity="0.38"/><circle cx="86.6" cy="216.9" r="1.0" fill="#c4c4c4" opacity="0.35"/><circle cx="243.6" cy="178.5" r="0.7" fill="#4a4a4a" opacity="0.37"/><circle cx="244.5" cy="179.5" r="0.7" fill="#c4c4c4" opacity="0.35"/><circle cx="44.0" cy="115.5" r="1.6" fill="#4a4a4a" opacity="0.78"/><circle cx="44.9" cy="116.5" r="1.6" fill="#c4c4c4" opacity="0.35"/><circle cx="195.8" cy="75.8" r="1.2" fill="#4a4a4a" opacity="0.51"/><circle cx="196.7" cy="76.8" r="1.2" fill="#c4c4c4" opacity="0.35"/><circle cx="107.1" cy="6.9" r="1.3" fill="#4a4a4a" opacity="0.72"/><circle cx="108.0" cy="7.9" r="1.3" fill="#c4c4c4" opacity="0.35"/><circle cx="232.0" cy="33.0" r="1.3" fill="#4a4a4a" opacity="0.43"/><circle cx="232.9" cy="34.0" r="1.3" fill="#c4c4c4" opacity="0.35"/><circle cx="226.5" cy="143.6" r="1.7" fill="#4a4a4a" opacity="0.71"/><circle cx="227.4" cy="144.6" r="1.7" fill="#c4c4c4" opacity="0.35"/><circle cx="40.2" cy="102.9" r="1.7" fill="#4a4a4a" opacity="0.56"/><circle cx="41.1" cy="103.9" r="1.7" fill="#c4c4c4" opacity="0.35"/><circle cx="139.8" cy="142.0" r="1.5" fill="#4a4a4a" opacity="0.77"/><circle cx="140.7" cy="143.0" r="1.5" fill="#c4c4c4" opacity="0.35"/><circle cx="170.8" cy="308.4" r="1.4" fill="#4a4a4a" opacity="0.40"/><circle cx="171.7" cy="309.4" r="1.4" fill="#c4c4c4" opacity="0.35"/><circle cx="259.5" cy="135.1" r="0.8" fill="#4a4a4a" opacity="0.79"/><circle cx="260.4" cy="136.1" r="0.8" fill="#c4c4c4" opacity="0.35"/><circle cx="13.4" cy="184.8" r="1.2" fill="#4a4a4a" opacity="0.75"/><circle cx="14.3" cy="185.8" r="1.2" fill="#c4c4c4" opacity="0.35"/><circle cx="126.7" cy="70.9" r="1.0" fill="#4a4a4a" opacity="0.44"/><circle cx="127.6" cy="71.9" r="1.0" fill="#c4c4c4" opacity="0.35"/><circle cx="180.2" cy="115.5" r="1.5" fill="#4a4a4a" opacity="0.46"/><circle cx="181.1" cy="116.5" r="1.5" fill="#c4c4c4" opacity="0.35"/><circle cx="113.8" cy="81.2" r="1.8" fill="#4a4a4a" opacity="0.73"/><circle cx="114.7" cy="82.2" r="1.8" fill="#c4c4c4" opacity="0.35"/><circle cx="270.7" cy="197.7" r="1.1" fill="#4a4a4a" opacity="0.41"/><circle cx="271.6" cy="198.7" r="1.1" fill="#c4c4c4" opacity="0.35"/><circle cx="265.0" cy="157.4" r="0.7" fill="#4a4a4a" opacity="0.43"/><circle cx="265.9" cy="158.4" r="0.7" fill="#c4c4c4" opacity="0.35"/><circle cx="34.1" cy="229.1" r="1.7" fill="#4a4a4a" opacity="0.44"/><circle cx="35.0" cy="230.1" r="1.7" fill="#c4c4c4" opacity="0.35"/><circle cx="254.1" cy="105.1" r="1.5" fill="#4a4a4a" opacity="0.74"/><circle cx="255.0" cy="106.1" r="1.5" fill="#c4c4c4" opacity="0.35"/><circle cx="199.3" cy="255.1" r="1.1" fill="#4a4a4a" opacity="0.35"/><circle cx="200.2" cy="256.1" r="1.1" fill="#c4c4c4" opacity="0.35"/><circle cx="164.2" cy="187.8" r="0.9" fill="#4a4a4a" opacity="0.53"/><circle cx="165.1" cy="188.8" r="0.9" fill="#c4c4c4" opacity="0.35"/><circle cx="102.9" cy="11.5" r="1.0" fill="#4a4a4a" opacity="0.52"/><circle cx="103.8" cy="12.5" r="1.0" fill="#c4c4c4" opacity="0.35"/><circle cx="153.0" cy="224.6" r="1.1" fill="#4a4a4a" opacity="0.79"/><circle cx="153.9" cy="225.6" r="1.1" fill="#c4c4c4" opacity="0.35"/><circle cx="259.9" cy="294.0" r="1.5" fill="#4a4a4a" opacity="0.65"/><circle cx="260.8" cy="295.0" r="1.5" fill="#c4c4c4" opacity="0.35"/><circle cx="172.1" cy="254.6" r="1.1" fill="#4a4a4a" opacity="0.62"/><circle cx="173.0" cy="255.6" r="1.1" fill="#c4c4c4" opacity="0.35"/><circle cx="217.0" cy="167.5" r="1.0" fill="#4a4a4a" opacity="0.38"/><circle cx="217.9" cy="168.5" r="1.0" fill="#c4c4c4" opacity="0.35"/><circle cx="30.5" cy="115.1" r="1.3" fill="#4a4a4a" opacity="0.69"/><circle cx="31.4" cy="116.1" r="1.3" fill="#c4c4c4" opacity="0.35"/><circle cx="228.1" cy="99.6" r="1.7" fill="#4a4a4a" opacity="0.47"/><circle cx="229.0" cy="100.6" r="1.7" fill="#c4c4c4" opacity="0.35"/><circle cx="228.6" cy="25.7" r="1.5" fill="#4a4a4a" opacity="0.65"/><circle cx="229.5" cy="26.7" r="1.5" fill="#c4c4c4" opacity="0.35"/><circle cx="304.4" cy="285.6" r="1.5" fill="#4a4a4a" opacity="0.73"/><circle cx="305.3" cy="286.6" r="1.5" fill="#c4c4c4" opacity="0.35"/><circle cx="235.7" cy="195.5" r="0.9" fill="#4a4a4a" opacity="0.58"/><circle cx="236.6" cy="196.5" r="0.9" fill="#c4c4c4" opacity="0.35"/><circle cx="285.3" cy="78.3" r="1.8" fill="#4a4a4a" opacity="0.59"/><circle cx="286.2" cy="79.3" r="1.8" fill="#c4c4c4" opacity="0.35"/><circle cx="126.9" cy="3.9" r="1.1" fill="#4a4a4a" opacity="0.43"/><circle cx="127.8" cy="4.9" r="1.1" fill="#c4c4c4" opacity="0.35"/><circle cx="208.7" cy="286.4" r="1.7" fill="#4a4a4a" opacity="0.63"/><circle cx="209.6" cy="287.4" r="1.7" fill="#c4c4c4" opacity="0.35"/><circle cx="124.8" cy="37.3" r="1.5" fill="#4a4a4a" opacity="0.60"/><circle cx="125.7" cy="38.3" r="1.5" fill="#c4c4c4" opacity="0.35"/><circle cx="228.3" cy="120.8" r="1.7" fill="#4a4a4a" opacity="0.45"/><circle cx="229.2" cy="121.8" r="1.7" fill="#c4c4c4" opacity="0.35"/><circle cx="99.3" cy="87.3" r="1.4" fill="#4a4a4a" opacity="0.75"/><circle cx="100.2" cy="88.3" r="1.4" fill="#c4c4c4" opacity="0.35"/><circle cx="55.7" cy="202.3" r="1.5" fill="#4a4a4a" opacity="0.45"/><circle cx="56.6" cy="203.3" r="1.5" fill="#c4c4c4" opacity="0.35"/><circle cx="22.7" cy="181.3" r="1.6" fill="#4a4a4a" opacity="0.75"/><circle cx="23.6" cy="182.3" r="1.6" fill="#c4c4c4" opacity="0.35"/><circle cx="232.3" cy="134.3" r="1.2" fill="#4a4a4a" opacity="0.59"/><circle cx="233.2" cy="135.3" r="1.2" fill="#c4c4c4" opacity="0.35"/><circle cx="288.0" cy="98.2" r="1.0" fill="#4a4a4a" opacity="0.62"/><circle cx="288.9" cy="99.2" r="1.0" fill="#c4c4c4" opacity="0.35"/><circle cx="307.5" cy="62.0" r="0.7" fill="#4a4a4a" opacity="0.40"/><circle cx="308.4" cy="63.0" r="0.7" fill="#c4c4c4" opacity="0.35"/><circle cx="284" cy="27" r="2.2" fill="#3c3c3c" opacity="0.8"/><circle cx="150" cy="143.6" r="1.8" fill="#3c3c3c" opacity="0.8"/><circle cx="159" cy="147" r="2" fill="#3c3c3c" opacity="0.8"/><circle cx="67.6" cy="115" r="2" fill="#3c3c3c" opacity="0.8"/><circle cx="79" cy="123" r="1.6" fill="#3c3c3c" opacity="0.8"/><circle cx="66" cy="147" r="1.5" fill="#3c3c3c" opacity="0.8"/><circle cx="82" cy="175.7" r="1.6" fill="#3c3c3c" opacity="0.8"/><circle cx="67.6" cy="202.7" r="1.5" fill="#3c3c3c" opacity="0.8"/><circle cx="194" cy="242.6" r="1.6" fill="#3c3c3c" opacity="0.8"/><circle cx="219.6" cy="251.7" r="1.5" fill="#3c3c3c" opacity="0.8"/><circle cx="206" cy="282" r="1.6" fill="#3c3c3c" opacity="0.8"/><circle cx="289" cy="280" r="1.8" fill="#3c3c3c" opacity="0.8"/><circle cx="250" cy="7" r="1.4" fill="#3c3c3c" opacity="0.8"/><circle cx="248" cy="34" r="1.4" fill="#3c3c3c" opacity="0.8"/>
<g stroke="#6f6f6f" fill="none" stroke-linecap="round"><path d="M13.5 18.6L9.5 25.0" stroke-width="1.7"/><path d="M9.5 25.0L9.1 30.2" stroke-width="1.8"/><path d="M9.1 30.2L8.4 35.5" stroke-width="1.4"/><path d="M79.0 2.0L80.7 7.0" stroke-width="1.8"/><path d="M80.7 7.0L82.1 12.0" stroke-width="2.1"/><path d="M82.1 12.0L83.0 17.0" stroke-width="2.4"/><path d="M83.0 17.0L82.6 23.5" stroke-width="2.5"/><path d="M82.6 23.5L81.0 30.0" stroke-width="2.3"/><path d="M81.0 30.0L83.1 35.2" stroke-width="2.1"/><path d="M83.1 35.2L84.5 40.5" stroke-width="1.9"/><path d="M84.5 40.5L89.5 47.0" stroke-width="1.5"/><path d="M113.0 2.0L116.1 7.8" stroke-width="1.9"/><path d="M116.1 7.8L118.0 13.5" stroke-width="2.5"/><path d="M118.0 13.5L118.3 20.2" stroke-width="2.8"/><path d="M118.3 20.2L120.0 27.0" stroke-width="3.0"/><path d="M120.0 27.0L118.2 33.0" stroke-width="2.6"/><path d="M118.2 33.0L116.5 39.0" stroke-width="1.8"/><path d="M221.0 2.0L220.0 7.0" stroke-width="2.2"/><path d="M220.0 7.0L217.9 12.0" stroke-width="2.6"/><path d="M217.9 12.0L216.0 17.0" stroke-width="3.0"/><path d="M216.0 17.0L215.6 22.7" stroke-width="3.2"/><path d="M215.6 22.7L213.5 28.3" stroke-width="3.1"/><path d="M213.5 28.3L213.0 34.0" stroke-width="3.0"/><path d="M213.0 34.0L211.0 42.0" stroke-width="2.8"/><path d="M211.0 42.0L203.0 47.0" stroke-width="2.6"/><path d="M203.0 47.0L200.3 51.5" stroke-width="2.5"/><path d="M200.3 51.5L197.6 56.0" stroke-width="2.3"/><path d="M197.6 56.0L194.4 61.0" stroke-width="2.0"/><path d="M194.4 61.0L192.0 66.0" stroke-width="1.5"/><path d="M282.0 27.0L287.0 32.0" stroke-width="2.0"/><path d="M287.0 32.0L288.8 38.0" stroke-width="1.7"/><path d="M288.8 38.0L290.5 44.0" stroke-width="1.8"/><path d="M290.5 44.0L292.8 49.7" stroke-width="1.8"/><path d="M292.8 49.7L294.2 55.3" stroke-width="1.8"/><path d="M294.2 55.3L297.0 61.0" stroke-width="1.8"/><path d="M297.0 61.0L298.9 66.0" stroke-width="1.8"/><path d="M298.9 66.0L301.4 71.0" stroke-width="1.8"/><path d="M301.4 71.0L304.0 76.0" stroke-width="1.8"/><path d="M304.0 76.0L309.0 79.0" stroke-width="1.7"/><path d="M309.0 79.0L307.1 84.2" stroke-width="1.8"/><path d="M307.1 84.2L304.0 89.5" stroke-width="2.1"/><path d="M304.0 89.5L299.0 94.6" stroke-width="1.7"/><path d="M153.7 55.7L156.6 60.9" stroke-width="2.0"/><path d="M156.6 60.9L158.8 66.0" stroke-width="3.0"/><path d="M158.8 66.0L157.6 71.5" stroke-width="3.4"/><path d="M157.6 71.5L157.8 77.0" stroke-width="3.5"/><path d="M157.8 77.0L156.2 82.5" stroke-width="3.5"/><path d="M156.2 82.5L156.0 88.0" stroke-width="3.6"/><path d="M156.0 88.0L158.2 93.6" stroke-width="3.5"/><path d="M158.2 93.6L159.5 99.1" stroke-width="3.4"/><path d="M159.5 99.1L162.0 104.7" stroke-width="3.3"/><path d="M162.0 104.7L162.2 110.5" stroke-width="3.2"/><path d="M162.2 110.5L164.3 116.3" stroke-width="3.3"/><path d="M164.3 116.3L164.2 122.2" stroke-width="3.3"/><path d="M164.2 122.2L165.5 128.0" stroke-width="3.4"/><path d="M165.5 128.0L165.4 133.2" stroke-width="3.3"/><path d="M165.4 133.2L166.7 138.3" stroke-width="3.2"/><path d="M166.7 138.3L166.8 143.4" stroke-width="3.2"/><path d="M166.8 143.4L166.5 148.6" stroke-width="3.0"/><path d="M166.5 148.6L165.4 154.2" stroke-width="3.0"/><path d="M165.4 154.2L165.5 159.9" stroke-width="3.1"/><path d="M165.5 159.9L164.0 165.5" stroke-width="3.2"/><path d="M164.0 165.5L162.0 172.0" stroke-width="3.7"/><path d="M162.0 172.0L159.6 178.0" stroke-width="3.8"/><path d="M159.6 178.0L157.0 184.0" stroke-width="2.8"/><path d="M157.0 184.0L154.7 190.0" stroke-width="2.3"/><path d="M154.7 190.0L152.0 196.0" stroke-width="2.2"/><path d="M152.0 196.0L146.6 197.5" stroke-width="2.2"/><path d="M146.6 197.5L142.0 199.0" stroke-width="2.0"/><path d="M142.0 199.0L140.9 205.0" stroke-width="1.9"/><path d="M140.9 205.0L138.5 211.0" stroke-width="1.7"/><path d="M138.5 211.0L135.3 215.0" stroke-width="1.6"/><path d="M135.3 215.0L132.2 219.0" stroke-width="1.6"/><path d="M132.2 219.0L128.0 223.0" stroke-width="1.6"/><path d="M128.0 223.0L124.2 227.5" stroke-width="1.6"/><path d="M124.2 227.5L119.1 232.0" stroke-width="1.6"/><path d="M119.1 232.0L115.0 236.5" stroke-width="1.6"/><path d="M115.0 236.5L113.1 243.2" stroke-width="1.6"/><path d="M113.1 243.2L111.5 250.0" stroke-width="1.6"/><path d="M111.5 250.0L109.9 255.0" stroke-width="1.6"/><path d="M109.9 255.0L108.7 260.0" stroke-width="1.5"/><path d="M108.7 260.0L108.0 265.0" stroke-width="1.4"/><path d="M223.0 62.5L220.7 67.5" stroke-width="2.4"/><path d="M220.7 67.5L219.6 72.6" stroke-width="3.2"/><path d="M219.6 72.6L221.0 77.7" stroke-width="3.7"/><path d="M221.0 77.7L223.1 82.7" stroke-width="3.8"/><path d="M223.1 82.7L224.7 87.8" stroke-width="3.9"/><path d="M224.7 87.8L224.8 93.4" stroke-width="4.0"/><path d="M224.8 93.4L226.5 99.1" stroke-width="4.1"/><path d="M226.5 99.1L227.0 104.7" stroke-width="4.2"/><path d="M227.0 104.7L226.3 110.1" stroke-width="4.2"/><path d="M226.3 110.1L225.8 115.5" stroke-width="4.1"/><path d="M225.8 115.5L226.1 121.0" stroke-width="4.1"/><path d="M226.1 121.0L225.1 126.4" stroke-width="4.1"/><path d="M225.1 126.4L224.7 131.8" stroke-width="4.0"/><path d="M224.7 131.8L225.6 138.4" stroke-width="3.7"/><path d="M225.6 138.4L227.0 145.0" stroke-width="3.1"/><path d="M227.0 145.0L226.6 150.1" stroke-width="2.8"/><path d="M226.6 150.1L226.6 155.2" stroke-width="3.0"/><path d="M226.6 155.2L225.4 160.4" stroke-width="3.0"/><path d="M225.4 160.4L225.7 165.5" stroke-width="3.2"/><path d="M225.7 165.5L224.8 171.0" stroke-width="3.2"/><path d="M224.8 171.0L221.9 176.5" stroke-width="3.1"/><path d="M221.9 176.5L221.0 182.0" stroke-width="3.0"/><path d="M221.0 182.0L217.3 187.3" stroke-width="2.8"/><path d="M217.3 187.3L213.0 192.6" stroke-width="2.4"/><path d="M213.0 192.6L205.0 195.0" stroke-width="1.8"/><path d="M221.0 182.0L223.8 186.7" stroke-width="2.4"/><path d="M223.8 186.7L225.0 191.3" stroke-width="2.4"/><path d="M225.0 191.3L228.0 196.0" stroke-width="2.4"/><path d="M228.0 196.0L228.2 201.0" stroke-width="2.3"/><path d="M228.2 201.0L227.3 206.0" stroke-width="2.2"/><path d="M227.3 206.0L227.4 211.0" stroke-width="2.2"/><path d="M227.4 211.0L227.0 216.0" stroke-width="2.0"/><path d="M227.0 216.0L227.4 221.1" stroke-width="2.0"/><path d="M227.4 221.1L228.6 226.2" stroke-width="2.2"/><path d="M228.6 226.2L229.9 231.4" stroke-width="2.2"/><path d="M229.9 231.4L231.4 236.5" stroke-width="2.3"/><path d="M231.4 236.5L232.4 242.4" stroke-width="2.4"/><path d="M232.4 242.4L231.8 248.2" stroke-width="2.4"/><path d="M231.8 248.2L233.0 254.1" stroke-width="2.4"/><path d="M233.0 254.1L233.0 260.0" stroke-width="2.4"/><path d="M233.0 260.0L232.8 265.0" stroke-width="2.4"/><path d="M232.8 265.0L232.0 270.0" stroke-width="2.5"/><path d="M232.0 270.0L230.3 275.0" stroke-width="2.5"/><path d="M230.3 275.0L229.7 280.0" stroke-width="2.6"/><path d="M229.7 280.0L227.5 284.7" stroke-width="2.6"/><path d="M227.5 284.7L225.7 289.3" stroke-width="2.6"/><path d="M225.7 289.3L223.6 294.0" stroke-width="2.6"/><path d="M223.6 294.0L224.4 299.0" stroke-width="2.6"/><path d="M224.4 299.0L223.9 304.0" stroke-width="2.7"/><path d="M223.9 304.0L225.2 309.0" stroke-width="2.7"/><path d="M225.2 309.0L225.7 314.0" stroke-width="2.7"/><path d="M225.7 314.0L225.7 319.0" stroke-width="2.8"/><path d="M229.0 200.0L236.0 200.5" stroke-width="1.2"/><path d="M236.0 200.5L243.0 201.0" stroke-width="1.1"/><path d="M268.6 74.0L272.0 81.0" stroke-width="2.1"/><path d="M272.0 81.0L271.3 86.0" stroke-width="2.7"/><path d="M271.3 86.0L268.9 91.0" stroke-width="3.0"/><path d="M268.9 91.0L268.9 96.0" stroke-width="3.2"/><path d="M268.9 96.0L267.0 101.0" stroke-width="3.5"/><path d="M267.0 101.0L266.1 106.1" stroke-width="3.6"/><path d="M266.1 106.1L266.1 111.3" stroke-width="3.5"/><path d="M266.1 111.3L266.2 116.4" stroke-width="3.4"/><path d="M266.2 116.4L266.3 121.5" stroke-width="3.4"/><path d="M266.3 121.5L265.1 126.7" stroke-width="3.3"/><path d="M265.1 126.7L265.0 131.8" stroke-width="3.2"/><path d="M265.0 131.8L266.6 137.7" stroke-width="2.7"/><path d="M266.6 137.7L267.0 143.6" stroke-width="1.7"/><path d="M13.5 111.5L14.4 117.0" stroke-width="1.8"/><path d="M14.4 117.0L14.9 122.5" stroke-width="2.3"/><path d="M14.9 122.5L16.0 128.0" stroke-width="2.8"/><path d="M16.0 128.0L16.1 133.7" stroke-width="3.1"/><path d="M16.1 133.7L16.2 139.3" stroke-width="3.3"/><path d="M16.2 139.3L17.0 145.0" stroke-width="3.5"/><path d="M17.0 145.0L15.9 151.0" stroke-width="3.5"/><path d="M15.9 151.0L15.5 157.0" stroke-width="3.4"/><path d="M15.5 157.0L15.8 163.0" stroke-width="3.2"/><path d="M15.8 163.0L15.0 169.0" stroke-width="3.1"/><path d="M15.0 169.0L14.9 174.9" stroke-width="3.0"/><path d="M14.9 174.9L13.0 180.8" stroke-width="3.0"/><path d="M13.0 180.8L12.1 186.7" stroke-width="3.0"/><path d="M12.1 186.7L12.0 192.6" stroke-width="3.0"/><path d="M12.0 192.6L10.1 199.3" stroke-width="3.0"/><path d="M10.1 199.3L6.8 206.0" stroke-width="3.0"/><path d="M6.8 206.0L7.9 211.7" stroke-width="2.9"/><path d="M7.9 211.7L8.8 217.3" stroke-width="2.6"/><path d="M8.8 217.3L10.0 223.0" stroke-width="2.3"/><path d="M10.0 223.0L10.1 228.0" stroke-width="2.2"/><path d="M10.1 228.0L11.1 233.0" stroke-width="2.3"/><path d="M11.1 233.0L12.0 238.0" stroke-width="2.3"/><path d="M12.0 238.0L12.0 243.0" stroke-width="2.4"/><path d="M12.0 243.0L10.6 249.0" stroke-width="2.4"/><path d="M10.6 249.0L9.3 255.0" stroke-width="2.4"/><path d="M9.3 255.0L7.5 261.0" stroke-width="2.4"/><path d="M7.5 261.0L6.8 267.0" stroke-width="2.4"/><path d="M6.8 267.0L6.2 272.7" stroke-width="2.2"/><path d="M6.2 272.7L3.9 278.3" stroke-width="1.9"/><path d="M3.9 278.3L3.4 284.0" stroke-width="1.6"/><path d="M18.6 128.0L24.3 125.5" stroke-width="2.3"/><path d="M24.3 125.5L30.0 123.0" stroke-width="2.2"/><path d="M30.0 123.0L36.1 121.3" stroke-width="2.2"/><path d="M36.1 121.3L40.8 119.7" stroke-width="2.1"/><path d="M40.8 119.7L47.0 118.0" stroke-width="2.0"/><path d="M47.0 118.0L52.5 117.5" stroke-width="1.9"/><path d="M52.5 117.5L58.0 117.0" stroke-width="1.8"/><path d="M58.0 117.0L62.5 116.5" stroke-width="1.7"/><path d="M62.5 116.5L67.6 113.0" stroke-width="1.5"/><path d="M12.0 243.0L18.2 244.7" stroke-width="1.8"/><path d="M18.2 244.7L24.4 246.3" stroke-width="1.8"/><path d="M24.4 246.3L30.0 248.0" stroke-width="1.8"/><path d="M30.0 248.0L35.1 250.3" stroke-width="1.8"/><path d="M35.1 250.3L41.2 252.7" stroke-width="1.9"/><path d="M41.2 252.7L47.0 255.0" stroke-width="2.0"/><path d="M47.0 255.0L50.9 257.5" stroke-width="2.4"/><path d="M50.9 257.5L55.7 260.0" stroke-width="3.0"/><path d="M55.7 260.0L62.1 256.5" stroke-width="3.0"/><path d="M62.1 256.5L67.6 253.0" stroke-width="2.4"/><path d="M67.6 253.0L72.9 252.6" stroke-width="2.0"/><path d="M72.9 252.6L78.8 252.1" stroke-width="1.9"/><path d="M78.8 252.1L84.5 251.7" stroke-width="1.8"/><path d="M84.5 251.7L90.9 255.1" stroke-width="2.0"/><path d="M90.9 255.1L96.0 258.5" stroke-width="2.2"/><path d="M96.0 258.5L101.0 265.0" stroke-width="2.2"/><path d="M54.0 265.0L53.4 270.0" stroke-width="2.6"/><path d="M53.4 270.0L52.5 275.0" stroke-width="2.6"/><path d="M52.5 275.0L50.7 280.0" stroke-width="2.6"/><path d="M50.7 280.0L52.3 285.2" stroke-width="3.3"/><path d="M52.3 285.2L54.0 290.5" stroke-width="4.8"/><path d="M54.0 290.5L58.0 291.0" stroke-width="4.5"/><path d="M58.0 291.0L55.7 300.7" stroke-width="3.0"/><path d="M55.7 300.7L53.5 306.3" stroke-width="2.3"/><path d="M53.5 306.3L51.6 312.0" stroke-width="2.1"/><path d="M51.6 312.0L49.0 317.6" stroke-width="1.9"/><path d="M319.0 172.0L312.3 173.8" stroke-width="2.1"/><path d="M312.3 173.8L305.7 175.7" stroke-width="2.3"/><path d="M305.7 175.7L300.7 174.0" stroke-width="2.1"/><path d="M300.7 174.0L302.1 179.0" stroke-width="2.0"/><path d="M302.1 179.0L303.9 184.0" stroke-width="2.3"/><path d="M303.9 184.0L305.7 189.0" stroke-width="2.6"/><path d="M305.7 189.0L305.8 194.1" stroke-width="2.8"/><path d="M305.8 194.1L306.7 199.2" stroke-width="2.7"/><path d="M306.7 199.2L308.1 204.4" stroke-width="2.7"/><path d="M308.1 204.4L308.0 209.5" stroke-width="2.6"/><path d="M308.0 209.5L308.1 215.4" stroke-width="2.7"/><path d="M308.1 215.4L307.0 221.2" stroke-width="2.8"/><path d="M307.0 221.2L306.3 227.1" stroke-width="3.0"/><path d="M306.3 227.1L305.7 233.0" stroke-width="3.1"/><path d="M305.7 233.0L303.2 238.7" stroke-width="3.4"/><path d="M303.2 238.7L300.7 244.3" stroke-width="3.7"/><path d="M300.7 244.3L299.0 250.0" stroke-width="4.0"/><path d="M299.0 250.0L296.2 256.0" stroke-width="4.0"/><path d="M296.2 256.0L294.0 262.0" stroke-width="3.6"/><path d="M294.0 262.0L293.2 268.0" stroke-width="3.3"/><path d="M293.2 268.0L292.2 274.0" stroke-width="3.1"/><path d="M292.2 274.0L290.5 280.0" stroke-width="2.9"/><path d="M290.5 280.0L292.3 285.7" stroke-width="2.8"/><path d="M292.3 285.7L295.0 291.3" stroke-width="2.7"/><path d="M295.0 291.3L296.6 297.0" stroke-width="2.6"/><path d="M296.6 297.0L296.3 302.5" stroke-width="2.6"/><path d="M296.3 302.5L295.6 308.0" stroke-width="2.5"/><path d="M295.6 308.0L294.9 313.5" stroke-width="2.5"/><path d="M294.9 313.5L294.0 319.0" stroke-width="2.4"/><path d="M172.0 265.0L168.4 269.3" stroke-width="1.7"/><path d="M168.4 269.3L164.0 273.6" stroke-width="1.9"/><path d="M164.0 273.6L162.1 280.3" stroke-width="2.2"/><path d="M162.1 280.3L160.5 287.0" stroke-width="2.6"/><path d="M160.5 287.0L161.3 292.7" stroke-width="2.8"/><path d="M161.3 292.7L161.2 298.3" stroke-width="2.8"/><path d="M161.2 298.3L162.0 304.0" stroke-width="2.8"/><path d="M162.0 304.0L163.1 309.0" stroke-width="2.8"/><path d="M163.1 309.0L164.7 314.0" stroke-width="2.7"/><path d="M164.7 314.0L165.5 319.0" stroke-width="2.6"/><path d="M101.0 236.5L108.0 240.0" stroke-width="1.2"/><path d="M108.0 240.0L110.0 245.0" stroke-width="1.2"/><path d="M110.0 245.0L111.5 250.0" stroke-width="1.2"/></g>
</g>
<rect x="0" y="0" width="321" height="1.6" fill="#444" opacity="0.75"/>
<rect x="0" y="319.4" width="321" height="1.6" fill="#444" opacity="0.75"/>
</svg><!--/TEX-->

<div class="abs" id="status"></div>
<div class="abs" style="left:1px;top:928px;font-size:14.7px;line-height:20px;white-space:nowrap;">elementi infrmFB, infrmFBPH e infrmDB...</div>
<svg class="abs" style="left:1116px;top:934px" width="13" height="13" viewBox="0 0 13 13" fill="#bdbdbd"><rect x="9" y="1" width="2" height="2"/><rect x="5" y="5" width="2" height="2"/><rect x="9" y="5" width="2" height="2"/><rect x="1" y="9" width="2" height="2"/><rect x="5" y="9" width="2" height="2"/><rect x="9" y="9" width="2" height="2"/></svg>
</body>
</html>
